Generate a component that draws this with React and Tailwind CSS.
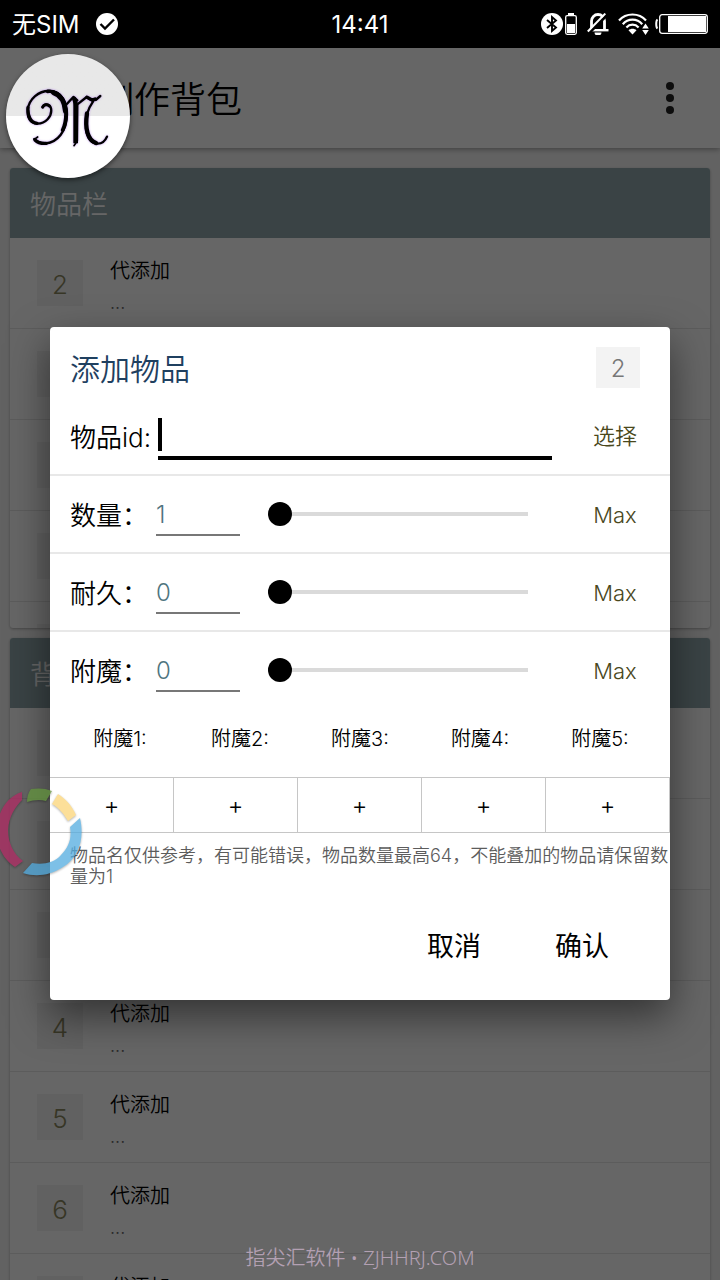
import { useState } from 'react';

const hotbar = [2, 3, 4, 5, 6];
const backpack = [1, 2, 3, 4, 5, 6, 7];
const enchants = [1, 2, 3, 4, 5];

function StatusBar() {
  return (
    <header className="grid h-12 shrink-0 grid-cols-3 items-center bg-black px-3 text-[24px] font-normal text-white">
      <div className="flex items-center gap-4">
        <span className="pt-[2px]">无SIM</span>
        <svg className="size-[22px]" viewBox="0 0 22 22">
          <circle cx="11" cy="11" r="11" fill="#fff" />
          <path d="M4.5 11 9 15.5 18 6.5" fill="none" stroke="#000" strokeWidth="2.4" />
        </svg>
      </div>
      <span className="pt-[2px] text-center">14:41</span>
      <div className="flex items-center justify-end">
        {/* bluetooth + batería del dispositivo */}
        <svg className="h-[22px] w-[36px]" viewBox="0 0 36 22">
          <circle cx="11" cy="11" r="11" fill="#fff" />
          <path d="M6 7 15 14.5 11 18V4L15 7.5 6 15" fill="none" stroke="#000" strokeWidth="1.9" />
          <rect x="24.7" y="2.7" width="10.6" height="18.6" rx="1.5" fill="none" stroke="#fff" strokeWidth="1.3" />
          <rect x="27" y="0" width="6" height="3" fill="#fff" />
          <rect x="26" y="11" width="8" height="9" fill="#fff" />
        </svg>
        <svg className="ml-[10px] h-[22px] w-[22px]" viewBox="0 0 22 22">
          <path d="M4.5 17V8a6.5 6.5 0 0 1 13 0v9" fill="none" stroke="#fff" strokeWidth="2.8" />
          <path d="M3 17.2H21.5" stroke="#fff" strokeWidth="2.4" />
          <path d="M7.5 19.5h7a3.5 3 0 0 1-7 0Z" fill="#fff" />
          <path d="M2.5 19.5 20 2" stroke="#000" strokeWidth="3" />
          <path d="M.8 18.5 18.3.6" stroke="#fff" strokeWidth="2" />
        </svg>
        <svg className="ml-[9px] h-[22px] w-[31px]" viewBox="0 0 31 22">
          <g fill="none" stroke="#fff" strokeWidth="2.2">
            <path d="M1 7.5C8-.5 21-.5 28 7.5" />
            <path d="M4.8 11.2c5.2-6 14.2-6 19.4 0" />
            <path d="M8.4 14.4c3.4-3.6 8.8-3.6 12.2 0" />
          </g>
          <path d="M10.5 17.3c2.2-2 5.8-2 8 0l-4 4.2Z" fill="#fff" />
          <path d="m27.5 10.5 3.3 5h-6.6ZM27.5 22l3.3-5h-6.6Z" fill="#fff" />
        </svg>
        <svg className="ml-[6px] h-[22px] w-[53px]" viewBox="0 0 53 22">
          <path d="M2.5 6.5C.8 7.5.8 14.5 2.5 15.5" fill="none" stroke="#fff" strokeWidth="2" />
          <rect x="4.7" y="1.7" width="47.6" height="18.6" rx="2.5" fill="none" stroke="#fff" strokeWidth="1.3" />
          <rect x="13" y="3" width="38" height="16" fill="#fff" />
        </svg>
      </div>
    </header>
  );
}

function SlotCard({ title, slots, className }) {
  return (
    <section className={`overflow-hidden rounded-[3px] bg-white shadow-[0_1px_3px_rgba(0,0,0,0.3)] ${className}`}>
      <h2 className="flex h-[70px] items-center bg-[#91a8ad] px-5 pt-[2px] text-[26px] text-white">{title}</h2>
      <ul>
        {slots.map((n) => (
          <li key={n} className="flex h-[91px] gap-[27px] border-b border-[#e6e6e6] pl-[27px]">
            <span className="mt-[22px] flex size-[46px] items-center justify-center bg-[#f2f2f2] pt-[2px] text-[26px] text-[#8b8860]">
              {n}
            </span>
            <div className="pt-[21px] leading-6">
              <p className="text-[20px] text-black">代添加</p>
              <p className="mt-2 text-[18px] text-[#666]">...</p>
            </div>
          </li>
        ))}
      </ul>
    </section>
  );
}

function SliderRow({ id, label, initial, last }) {
  const [value, setValue] = useState(initial);
  const max = 64;

  return (
    <div className={`flex items-center pl-5 pr-[14px] ${last ? 'h-[76px]' : 'h-[78px] border-b-2 border-[#e8e8e8]'}`}>
      <label htmlFor={id} className="w-[86px] whitespace-nowrap pt-1 text-[26px]">{label}：</label>
      <input
        id={id}
        type="text"
        value={value}
        onChange={(e) => setValue(e.target.value)}
        className="h-[44px] w-[84px] shrink-0 border-b-2 border-[#777] pt-1 text-[24px] text-[#4f7580] outline-none"
      />
      <input
        type="range"
        aria-label={label}
        min={initial}
        max={max}
        value={Number(value) || 0}
        onChange={(e) => setValue(e.target.value)}
        className="ml-7 h-6 min-w-0 flex-1 appearance-none bg-transparent [&::-webkit-slider-runnable-track]:h-1 [&::-webkit-slider-runnable-track]:bg-[#dadada] [&::-webkit-slider-thumb]:-mt-[10px] [&::-webkit-slider-thumb]:size-6 [&::-webkit-slider-thumb]:appearance-none [&::-webkit-slider-thumb]:rounded-full [&::-webkit-slider-thumb]:bg-black"
      />
      <button
        type="button"
        onClick={() => setValue(max)}
        className="ml-[46px] h-12 w-[82px] pt-1 text-[22px] text-[#4a481c]"
      >
        Max
      </button>
    </div>
  );
}

function AddItemDialog() {
  const [itemId, setItemId] = useState('');

  return (
    <form
      role="dialog"
      aria-labelledby="dialog-title"
      onSubmit={(e) => e.preventDefault()}
      className="w-full rounded-[4px] bg-white text-black shadow-[0_16px_40px_rgba(0,0,0,0.5)]"
    >
      <div className="flex items-center justify-between pl-5 pr-[30px] pt-5">
        <h2 id="dialog-title" className="pt-1 text-[30px] leading-[37px] text-[#1f4060]">添加物品</h2>
        <span className="flex h-[41px] w-11 items-center justify-center bg-[#f3f3f3] pt-1 text-[24px] text-[#777]">2</span>
      </div>

      <div className="mt-3 flex h-[76px] items-center border-b-2 border-[#e8e8e8] pl-5 pr-[14px]">
        <label htmlFor="item-id" className="w-[88px] whitespace-nowrap pt-[2px] text-[26px]">物品id:</label>
        <div className="flex h-[46px] flex-1 items-center border-b-4 border-black">
          {/* cursor */}
          {itemId === '' && <span className="h-[33px] w-1 bg-black" />}
          <input
            id="item-id"
            type="text"
            value={itemId}
            onChange={(e) => setItemId(e.target.value)}
            className="min-w-0 flex-1 text-[24px] outline-none"
          />
        </div>
        <button type="button" className="ml-[22px] h-12 w-[82px] text-[22px] text-[#4a481c]">选择</button>
      </div>

      <SliderRow id="count" label="数量" initial={1} />
      <SliderRow id="durability" label="耐久" initial={0} />
      <SliderRow id="enchant" label="附魔" initial={0} last />

      <div className="grid grid-cols-5 px-[10px] pb-[26px] pt-[19px] text-center text-[20px] leading-6">
        {enchants.map((n) => (
          <span key={n} id={`enchant-${n}`}>附魔{n}:</span>
        ))}
      </div>
      <div className="grid grid-cols-5 border-y border-[#c6c6c6]">
        {enchants.map((n) => (
          <button
            key={n}
            type="button"
            aria-labelledby={`enchant-${n}`}
            className="h-[54px] border-r border-[#c6c6c6] pt-[2px] text-[24px]"
          >
            +
          </button>
        ))}
      </div>

      <p className="mt-3 pl-5 text-[18px] leading-[21px] text-[#5c5c5c]">
        物品名仅供参考，有可能错误，物品数量最高64，不能叠加的物品请保留数量为1
      </p>

      <div className="mt-8 flex justify-end pb-[25px] pr-6 text-[27px] font-normal">
        <button type="button" className="h-14 w-32 pt-[2px]">取消</button>
        <button type="submit" className="h-14 w-32 pt-[2px]">确认</button>
      </div>
    </form>
  );
}

function FloatingLogo() {
  return (
    <button
      type="button"
      aria-label="悬浮窗"
      className="absolute left-[6px] top-[54px] size-[124px] rounded-full bg-linear-to-b from-[#e8e8e8] from-50% to-white to-50% shadow-[0_2px_5px_rgba(0,0,0,0.5)]"
    >
      <svg className="size-full drop-shadow-[0_0_1px_rgba(150,80,230,0.6)]" viewBox="-12 -48 372 372">
        <g fill="none" stroke="#000" strokeLinecap="round" strokeLinejoin="round">
          {/* espiral izquierda */}
          <path d="M98 112c3-13 22-12 25 3 5 25-18 47-42 46-20-1-30-18-28-40 3-34 34-60 67-58 37 2 51 35 51 70 0 48-28 86-66 87-16 0-26-6-32-13" strokeWidth="7" />
          <path d="M54 112c-2 26 8 45 27 48" strokeWidth="10" />
          <path d="M98 111c4-8 14-9 20-3" strokeWidth="9" />
          <path d="M113 64c36-3 54 32 55 66 0 20-3 36-10 50" strokeWidth="11" />
          <path d="M130 68c22 7 34 28 36 56" strokeWidth="14" />
          <path d="m73 208 10-7" strokeWidth="5" />
          <path d="M75 210c8 8 20 11 34 10" strokeWidth="10" />
          {/* trazo central */}
          <path d="m167 106 23-25 12 10" strokeWidth="7" />
          <path d="M190 84c8 6 7 18 7 30v106" strokeWidth="14" strokeLinecap="butt" />
          <path d="m203 104-1 108-10 15" strokeWidth="5" />
          {/* trazo derecho */}
          <path d="m205 101 25-20c9 8 18 12 27 9l14-12" strokeWidth="7" />
          <path d="m231 82 15 8 9-3" strokeWidth="10" />
          <path d="M249 95c-16 22-24 52-21 81 3 28 17 45 35 45 14 0 23-9 28-21" strokeWidth="7" />
          <path d="M231 130c-7 46 2 80 27 89" strokeWidth="13" />
        </g>
      </svg>
    </button>
  );
}

function FloatingRing() {
  return (
    <svg className="absolute left-0 top-[785px] h-[96px] w-[86px] opacity-75 drop-shadow-[0_1px_1px_rgba(0,0,0,0.4)]" viewBox="0 0 86 96">
      <path d="M22 7C5 12-5 31-3 53c2 13 9 23 18 29l8-6C13 69 8 57 8 45 9 31 15 22 22 15Z" fill="#b02a63" />
      <path d="M31 4c7-1 14-1 21 2l-6 10c-6-2-13-1-19 1 0-5 1-9 4-13Z" fill="#63953d" />
      <path d="M58 9c8 5 14 12 18 21l-8 6c-4-7-9-13-16-17Z" fill="#fbd577" />
      <path d="M80 33c5 22-2 40-17 49-14 9-28 10-40 6l9-10c11 2 22 0 29-8 8-8 11-17 9-28Z" fill="#52ace0" />
    </svg>
  );
}

export default function App() {
  return (
    <div
      lang="zh-CN"
      className="relative flex h-screen flex-col overflow-hidden bg-[#f6f6f6] font-[Inter,'Noto_Sans_CJK_SC',sans-serif] font-[350]"
    >
      <StatusBar />

      <div className="relative min-h-0 flex-1 overflow-hidden">
        <div className="relative flex h-[100px] items-center justify-between bg-white pl-[98px] pr-[30px] shadow-[0_1px_6px_rgba(0,0,0,0.4)]">
          <h1 className="pt-1 text-[36px] text-black">制作背包</h1>
          <button type="button" aria-label="菜单" className="flex w-10 flex-col items-center gap-1">
            <span className="size-2 rounded-full bg-[#222]" />
            <span className="size-2 rounded-full bg-[#222]" />
            <span className="size-2 rounded-full bg-[#222]" />
          </button>
        </div>
        <main className="flex flex-col gap-[10px] px-[10px] pt-5">
          <SlotCard title="物品栏" slots={hotbar} className="h-[460px]" />
          <SlotCard title="背包" slots={backpack} className="shrink-0" />
        </main>

        <div className="absolute inset-0 flex items-center bg-black/60 px-[50px] pb-[2px]">
          <AddItemDialog />
        </div>
      </div>

      <FloatingLogo />
      <FloatingRing />
      <p className="absolute inset-x-0 bottom-2 text-center font-['Noto_Sans','Noto_Sans_CJK_SC',sans-serif] text-[20px] leading-7 text-[#b3a0b3]">
        指尖汇软件 • ZJHHRJ.COM
      </p>
    </div>
  );
}
